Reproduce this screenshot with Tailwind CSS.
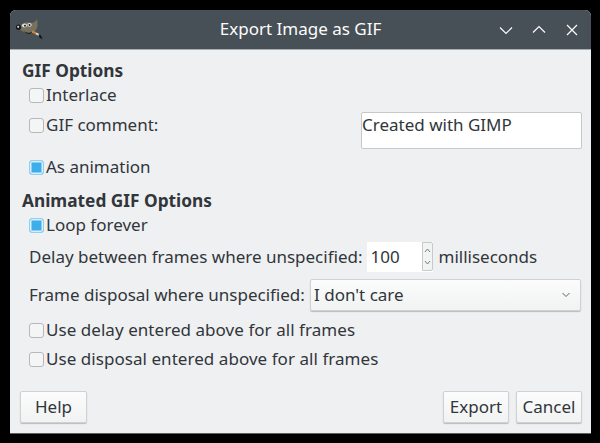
<!DOCTYPE html>
<html><head><meta charset="utf-8">
<script src="https://cdn.jsdelivr.net/npm/@tailwindcss/browser@4"></script>
</head>
<body class="bg-black w-[600px] h-[443px] overflow-hidden font-['Noto_Sans',sans-serif] text-[17px] leading-[22px] text-[#31363b]">
<div class="ml-[10px] mt-[10px] w-[581px] h-[424px] rounded-t-[6px] overflow-hidden bg-[#eff0f1] flex flex-col border-b border-[#5c6064]">
  <div class="h-[40px] shrink-0 bg-[#475057] border-b border-[#a9adb0] flex items-center text-[#fcfcfc] relative">
    <svg class="ml-[5px] mt-[-1px]" width="28" height="28" viewBox="0 0 28 28">
      <path d="M4 11 C8 8 13 6 16 8 C19 8 21 6 22 4 C23 8 23 12 21 15 C18 19 14 20 11 18 C8 17 6 15 4 14 Z" fill="#77725f"/>
      <path d="M8 15 C10 18 15 19 18 16 C17 20 11 20 8 15Z" fill="#1c1c1c"/>
      <circle cx="3.5" cy="12.2" r="2.6" fill="#1a1a1a"/><circle cx="3.2" cy="11.8" r="1.1" fill="#cfcfcf"/>
      <ellipse cx="9.5" cy="10.5" rx="2.5" ry="1.9" fill="#dedede"/><circle cx="10" cy="10.7" r="1" fill="#222"/>
      <ellipse cx="14.5" cy="9.8" rx="2.2" ry="1.9" fill="#dedede"/><circle cx="14.5" cy="10" r="1" fill="#222"/>
      <path d="M17 16.5 L21 18.3" stroke="#d8832a" stroke-width="2"/>
      <path d="M21 18.3 L24 20" stroke="#d9d9d9" stroke-width="2"/>
      <path d="M23.5 19 L26 20.5 L27.5 24.5 L24.5 22.5Z" fill="#111"/>
    </svg>
    <div class="absolute inset-x-0 text-center top-[8px]">Export Image as GIF</div>
    <div class="ml-auto mr-[12px] flex items-center gap-[19px]">
      <svg width="14" height="14" viewBox="0 0 14 14" fill="none" stroke="#fcfcfc" stroke-width="1.2"><path d="M1 4.5 L7 10.5 L13 4.5"/></svg>
      <svg width="14" height="14" viewBox="0 0 14 14" fill="none" stroke="#fcfcfc" stroke-width="1.2"><path d="M1 9.5 L7 3.5 L13 9.5"/></svg>
      <svg width="14" height="14" viewBox="0 0 14 14" fill="none" stroke="#fcfcfc" stroke-width="1.2"><path d="M2 2 L12 12 M12 2 L2 12"/></svg>
    </div>
  </div>
  <div class="flex-1 flex flex-col pl-[12px] pr-[10px]">
    <div class="font-bold text-[17.3px] h-[22px] mt-[10px]">GIF Options</div>
    <div class="h-[22px] mt-[2px] ml-[7px] flex items-center">
      <span class="w-[15px] h-[15px] rounded-[3px] border border-[#b6b8ba] bg-[#f4f5f5] mr-[2px] box-border"></span>Interlace
    </div>
    <div class="h-[35px] mt-[8px] ml-[7px] flex items-start">
      <span class="w-[15px] h-[15px] mt-[4px] rounded-[3px] border border-[#b6b8ba] bg-[#f4f5f5] mr-[2px] box-border"></span>
      <span>GIF comment:</span>
      <div class="ml-auto -mr-[1px] w-[221px] h-[37px] -mt-[2px] bg-white border border-[#c6c8ca] rounded-[2px] leading-[24px]">Created with GIMP</div>
    </div>
    <div class="h-[22px] mt-[7px] ml-[7px] flex items-center">
      <span class="w-[15px] h-[15px] rounded-[3px] border border-[#8fd0f2] bg-[#3daee9] shadow-[inset_0_0_0_1.5px_#dceefa] mr-[2px] box-border"></span>As animation
    </div>
    <div class="font-bold text-[17.3px] h-[22px] mt-[12px]">Animated GIF Options</div>
    <div class="h-[22px] mt-[2px] ml-[7px] flex items-center">
      <span class="w-[15px] h-[15px] rounded-[3px] border border-[#8fd0f2] bg-[#3daee9] shadow-[inset_0_0_0_1.5px_#dceefa] mr-[2px] box-border"></span>Loop forever
    </div>
    <div class="h-[30px] mt-[6px] ml-[7px] flex items-center">
      <span>Delay between frames where unspecified:</span>
      <div class="ml-[4px] w-[66px] h-[30px] flex bg-white">
        <div class="flex-1 pl-[4px] leading-[29px]">100</div>
        <div class="w-[11px] h-[29px] bg-[#f2f3f3] border border-[#c6c8ca] rounded-r-[2px] flex flex-col items-center justify-between py-[5px] box-border">
          <svg width="7" height="5" viewBox="0 0 7 5" fill="none" stroke="#777b7f"><path d="M1 4 L3.5 1 L6 4"/></svg>
          <svg width="7" height="5" viewBox="0 0 7 5" fill="none" stroke="#777b7f"><path d="M1 1 L3.5 4 L6 1"/></svg>
        </div>
      </div>
      <span class="ml-[6px]">milliseconds</span>
    </div>
    <div class="h-[32px] mt-[7px] ml-[7px] flex items-center">
      <span>Frame disposal where unspecified:</span>
      <div class="ml-auto w-[271px] h-[32px] bg-gradient-to-b from-[#fcfcfc] to-[#f1f2f2] border border-[#cfd1d2] rounded-[2px] shadow-[0_1px_1px_#b9bbbd] flex items-center pl-[3px] box-border">
        <span>I don't care</span>
        <svg class="ml-auto mr-[9px]" width="10" height="6" viewBox="0 0 10 6" fill="none" stroke="#5f6468"><path d="M1.5 1 L5 4.5 L8.5 1"/></svg>
      </div>
    </div>
    <div class="h-[22px] mt-[8px] ml-[7px] flex items-center tracking-[0.05px]">
      <span class="w-[15px] h-[15px] rounded-[3px] border border-[#b6b8ba] bg-[#f4f5f5] mr-[2px] box-border"></span>Use delay entered above for all frames
    </div>
    <div class="h-[22px] mt-[7px] ml-[7px] flex items-center tracking-[0.05px]">
      <span class="w-[15px] h-[15px] rounded-[3px] border border-[#b6b8ba] bg-[#f4f5f5] mr-[2px] box-border"></span>Use disposal entered above for all frames
    </div>
    <div class="flex mt-[21px] -ml-[2px] -mr-[1px] h-[32px]">
      <div class="w-[67px] h-[32px] bg-gradient-to-b from-[#fcfcfc] to-[#f1f2f2] border border-[#cfd1d2] rounded-[2px] shadow-[0_1px_1px_#b9bbbd] flex items-center justify-center box-border">Help</div>
      <div class="ml-auto w-[66px] h-[32px] bg-gradient-to-b from-[#fcfcfc] to-[#f1f2f2] border border-[#cfd1d2] rounded-[2px] shadow-[0_1px_1px_#b9bbbd] flex items-center justify-center box-border">Export</div>
      <div class="ml-[7px] w-[66px] h-[32px] bg-gradient-to-b from-[#fcfcfc] to-[#f1f2f2] border border-[#cfd1d2] rounded-[2px] shadow-[0_1px_1px_#b9bbbd] flex items-center justify-center box-border">Cancel</div>
    </div>
  </div>
</div>
</body></html>
